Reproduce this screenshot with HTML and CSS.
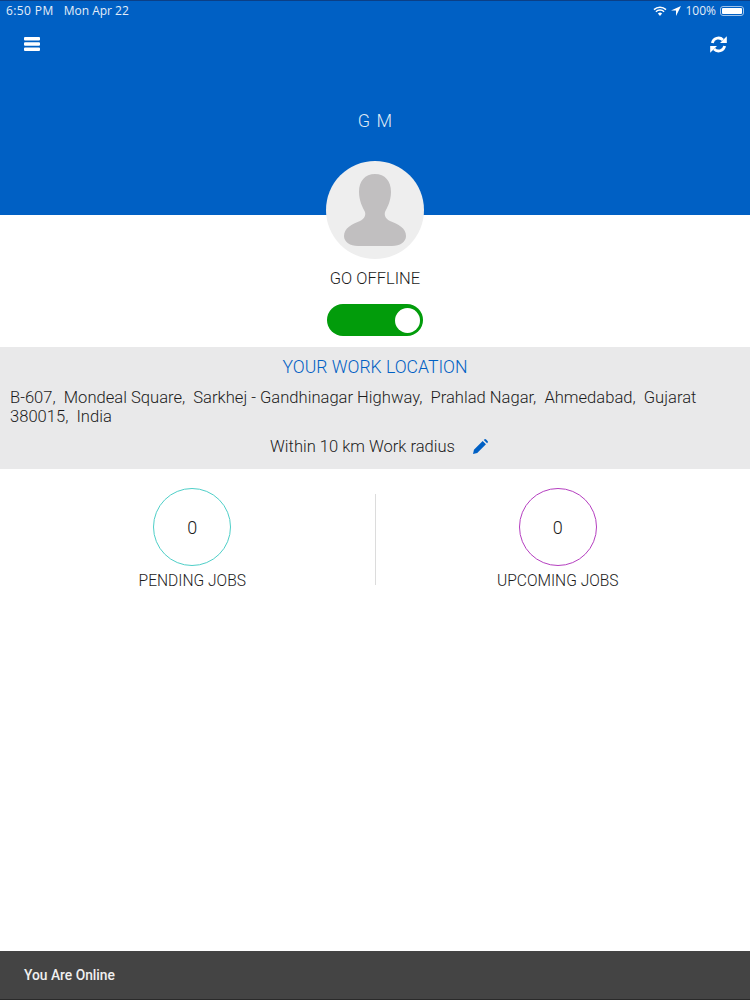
FILE: index.html
```html
<!DOCTYPE html>
<html lang="en">
<head>
    <meta charset="UTF-8">
    <meta name="viewport" content="width=device-width, initial-scale=1.0">
    <title>Home</title>
    <link rel="stylesheet" href="styles.css">
</head>
<body>
<div class="page">
    <header class="header">
        <div class="status-bar">
            <div class="status-left">
                <span class="status-time">6:50 PM</span>
                <span>Mon Apr 22</span>
            </div>
            <div class="status-right">
                <svg class="wifi" width="14" height="10" viewBox="0 0 14 10">
                    <path d="M7 10 4.9 7.6a3 3 0 0 1 4.2 0z" fill="#fff"/>
                    <path d="M1 3.6a8.6 8.6 0 0 1 12 0M2.9 5.7a5.9 5.9 0 0 1 8.2 0" fill="none" stroke="#fff" stroke-width="1.5"/>
                </svg>
                <svg class="arrow" width="10" height="10" viewBox="0 0 10 10">
                    <path d="M10 0 0 4.6h5V10z" fill="#fff"/>
                </svg>
                <span>100%</span>
                <div class="battery"><div class="battery-fill"></div></div>
            </div>
        </div>
        <div class="toolbar">
            <svg width="16" height="14" viewBox="0 0 16 14">
                <path d="M1 0h14a1 1 0 0 1 1 1v1.6a1 1 0 0 1-1 1H1a1 1 0 0 1-1-1V1a1 1 0 0 1 1-1zM1 5.2h14a1 1 0 0 1 1 1v1.6a1 1 0 0 1-1 1H1a1 1 0 0 1-1-1V6.2a1 1 0 0 1 1-1zM1 10.4h14a1 1 0 0 1 1 1V13a1 1 0 0 1-1 1H1a1 1 0 0 1-1-1v-1.6a1 1 0 0 1 1-1z" fill="#fff"/>
            </svg>
            <svg width="17" height="17" viewBox="0 0 16 16">
                <path d="M2.2 6.6A5.9 5.9 0 0 1 12.2 3.7" fill="none" stroke="#fff" stroke-width="2.6"/>
                <path d="M15.8 0.3v6.4h-6.4z" fill="#fff"/>
                <path d="M13.8 9.4A5.9 5.9 0 0 1 3.8 12.3" fill="none" stroke="#fff" stroke-width="2.6"/>
                <path d="M0.2 15.7V9.3h6.4z" fill="#fff"/>
            </svg>
        </div>
        <h1 class="user-name">G M</h1>
    </header>

    <section class="profile">
        <div class="avatar">
            <svg width="62" height="72" viewBox="0 0 62 72">
                <path d="M31 0C41 0 47 7 47 18C47 27 43 34 41 38C40 42 42 45 46 47C54 50 62 54 62 62C62 68 56 72 48 72H14C6 72 0 68 0 62C0 54 8 50 16 47C20 45 22 42 21 38C19 34 15 27 15 18C15 7 21 0 31 0z" fill="#c1bfc0"/>
            </svg>
        </div>
        <div class="go-offline">GO OFFLINE</div>
        <div class="toggle"><div class="toggle-knob"></div></div>
    </section>

    <section class="location">
        <h2 class="location-title">YOUR WORK LOCATION</h2>
        <p class="address">B-607,&nbsp; Mondeal Square,&nbsp; Sarkhej - Gandhinagar Highway,&nbsp; Prahlad Nagar,&nbsp; Ahmedabad,&nbsp; Gujarat 380015,&nbsp; India</p>
        <div class="radius">
            <span>Within 10 km Work radius</span>
            <svg width="15" height="15" viewBox="0 0 16 16">
                <path d="M0 16l1-4.5L10.3 2.200l3.500 3.500L4.500 15zM11.500 1l0.500-0.500a1.500 1.500 0 0 1 2 0l1.500 1.500a1.500 1.500 0 0 1 0 2l-0.500 0.500z" fill="#0060c4"/>
            </svg>
        </div>
    </section>

    <section class="jobs">
        <div class="job">
            <div class="job-circle pending">0</div>
            <div class="job-label">PENDING JOBS</div>
        </div>
        <div class="job-divider"></div>
        <div class="job">
            <div class="job-circle upcoming">0</div>
            <div class="job-label">UPCOMING JOBS</div>
        </div>
    </section>

    <footer class="online-bar">You Are Online</footer>
</div>
</body>
</html>
```

FILE: styles.css
```css
body {
    margin: 0;
    font-family: Roboto, "Liberation Sans", sans-serif;
    font-weight: 300;
    color: #1c1c1c;
    background-color: #fff;
}
.page {
    display: flex;
    flex-direction: column;
    height: 1000px;
    overflow: hidden;
}
.header {
    height: 215px;
    background-color: #0060c4;
    color: #fff;
    box-sizing: border-box;
    border-top: 1px solid #0b3f86;
}
.status-bar {
    display: flex;
    justify-content: space-between;
    align-items: center;
    height: 19px;
    padding: 0 6px;
    font-size: 12px;
    font-family: "Open Sans", Roboto, sans-serif;
    font-weight: 400;
    color: #e3edf8;
}
.status-left {
    display: flex;
    gap: 10px;
}
.status-time {
    letter-spacing: 0.4px;
}
.status-right {
    display: flex;
    align-items: center;
    gap: 4px;
}
.battery {
    width: 24px;
    height: 10px;
    padding: 1px;
    box-sizing: border-box;
    border: 1px solid #9fc3ea;
    border-radius: 3px;
}
.battery-fill {
    height: 100%;
    background-color: #fff;
    border-radius: 1px;
}
.toolbar {
    display: flex;
    justify-content: space-between;
    align-items: center;
    height: 16px;
    padding: 0 23px 0 24px;
    margin-top: 16px;
}
.user-name {
    margin: 58px 0 0;
    padding-left: 2px;
    text-align: center;
    font-size: 18px;
    font-weight: 300;
    letter-spacing: 2px;
    word-spacing: -2px;
    line-height: 22px;
    color: #dfe9f5;
}
.profile {
    display: flex;
    flex-direction: column;
    align-items: center;
    margin-top: -54px;
}
.avatar {
    display: flex;
    justify-content: center;
    align-items: flex-end;
    width: 98px;
    height: 98px;
    padding-bottom: 13px;
    box-sizing: border-box;
    border-radius: 50%;
    background-color: #eeeeee;
}
.go-offline {
    margin-top: 10px;
    font-size: 16.5px;
    line-height: 19px;
}
.toggle {
    display: flex;
    justify-content: flex-end;
    align-items: center;
    width: 96px;
    height: 32px;
    margin-top: 16px;
    padding-right: 3px;
    box-sizing: border-box;
    border-radius: 16px;
    background-color: #029c0b;
}
.toggle-knob {
    width: 25px;
    height: 25px;
    border-radius: 50%;
    background-color: #fff;
}
.location {
    height: 122px;
    margin-top: 11px;
    padding: 10px 10px 0;
    box-sizing: border-box;
    background-color: #e9e9ea;
}
.location-title {
    margin: 0;
    text-align: center;
    font-size: 17.6px;
    font-weight: 300;
    line-height: 20px;
    color: #0060c4;
}
.address {
    margin: 11px 0 0;
    font-size: 16.58px;
    line-height: 19px;
}
.radius {
    display: flex;
    justify-content: center;
    align-items: center;
    gap: 18px;
    margin-top: 11px;
    padding-left: 8px;
    font-size: 16.55px;
    line-height: 19px;
}
.jobs {
    display: flex;
    align-items: flex-start;
    padding: 19px 10px 0;
}
.job {
    flex: 1;
    display: flex;
    flex-direction: column;
    align-items: center;
}
.job-circle {
    display: flex;
    justify-content: center;
    align-items: center;
    width: 78px;
    height: 78px;
    box-sizing: border-box;
    border: 1px solid;
    border-radius: 50%;
    font-size: 18px;
}
.pending {
    border-color: #4fcfc8;
}
.upcoming {
    border-color: #b53fc0;
}
.job-label {
    margin-top: 6px;
    font-size: 15.6px;
    line-height: 18px;
}
.job-divider {
    width: 1px;
    height: 91px;
    margin-top: 6px;
    background-color: #dcdcdc;
}
.online-bar {
    margin-top: auto;
    height: 49px;
    padding-left: 24px;
    box-sizing: border-box;
    border-bottom: 1px solid #2a2a2a;
    line-height: 48px;
    font-size: 13.8px;
    font-weight: 500;
    color: #f0f0f0;
    background-color: #444444;
}
```
